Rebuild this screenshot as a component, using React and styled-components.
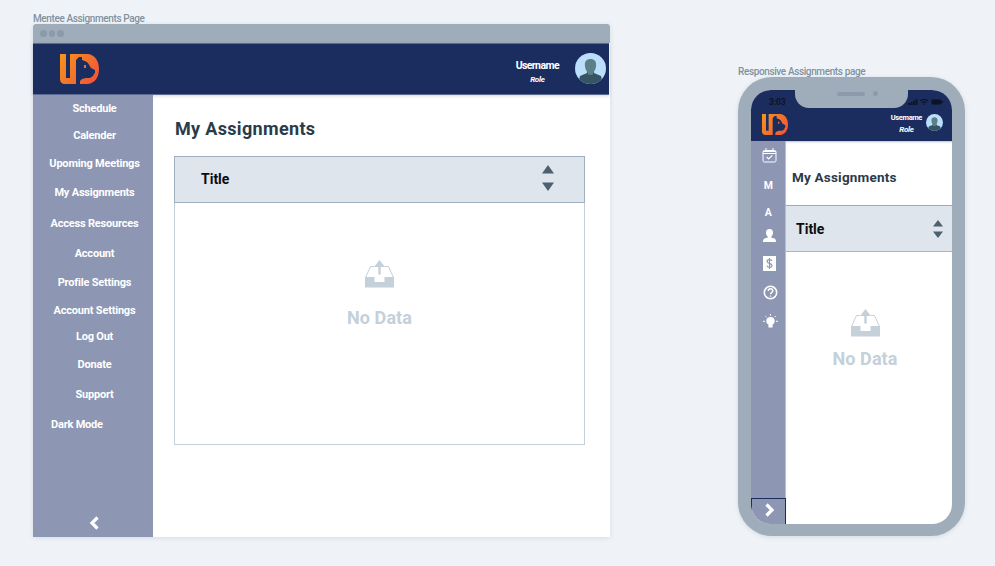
import React from "react";
import styled, { createGlobalStyle, css } from "styled-components";

const GlobalStyle = createGlobalStyle`
  *, *::before, *::after { box-sizing: border-box; }
  body {
    margin: 0;
    background: #eff3f7;
    font-family: Roboto, "Liberation Sans", sans-serif;
    overflow: hidden;
  }
`;

const Canvas = styled.main`
  display: flex;
  align-items: flex-start;
  gap: 128px;
  width: 995px;
  height: 566px;
  padding-left: 33px;
`;

const Artboard = styled.section`
  width: ${(p) => p.$width}px;
  padding-top: ${(p) => p.$top}px;
`;

const ArtboardLabel = styled.div`
  height: 12px;
  font-size: 10px;
  font-weight: 500;
  line-height: 14px;
  letter-spacing: -0.38px;
  color: #80919f;
  white-space: nowrap;
`;

const BrowserWindow = styled.div`
  background: #fff;
  border-radius: 3px 3px 0 0;
  box-shadow: 0 1px 4px rgba(120, 140, 160, 0.22);
`;

const BrowserBar = styled.div`
  display: flex;
  align-items: center;
  gap: 2px;
  height: 19px;
  padding-left: 7px;
  background: #9eadb9;
  border-radius: 3px 3px 0 0;
`;

const BarDot = styled.span`
  width: 6.5px;
  height: 6.5px;
  border-radius: 50%;
  background: #8c9bab;
`;

const Header = styled.header`
  display: flex;
  justify-content: space-between;
  background: #1b2d5f;
  ${(p) =>
    p.$compact
      ? css`
          height: 36px;
          padding: 9px 9px 0 11px;
        `
      : css`
          height: 52px;
          width: 576px;
          padding: 10px 3px 0 27px;
          border-top: 1px solid #5c6b8d;
          border-bottom: 1px solid #5d6b91;
          box-shadow: 0 1px 3px rgba(30, 45, 95, 0.2);
        `}
`;

const Account = styled.div`
  display: flex;
  align-items: flex-start;
  gap: ${(p) => (p.$compact ? 4 : 16)}px;
`;

const AccountText = styled.div`
  display: flex;
  flex-direction: column;
  align-items: center;
  color: #fff;
  font-weight: 700;
  white-space: nowrap;
  ${(p) =>
    p.$compact
      ? css`
          margin-top: -2px;
          font-size: 7.5px;
          line-height: 11px;
          letter-spacing: -0.4px;
        `
      : css`
          margin-top: 5px;
          font-size: 10.5px;
          line-height: 14px;
          letter-spacing: -0.6px;
        `}
`;

const Role = styled.span`
  font-size: 8px;
  font-style: italic;
  letter-spacing: -0.3px;
  ${(p) => p.$compact && css`margin-top: 1px;`}
`;

const AvatarSvg = styled.svg`
  display: block;
  flex: none;
  margin-top: ${(p) => p.$top}px;
`;

const WindowBody = styled.div`
  display: flex;
  height: 442px;
`;

const Sidebar = styled.nav`
  display: flex;
  flex: none;
  flex-direction: column;
  width: 120px;
  background: #8d96b2;
  color: #fff;
`;

const SidebarItem = styled.a`
  display: flex;
  align-items: center;
  justify-content: ${(p) => (p.$start ? "flex-start" : "center")};
  height: ${(p) => p.$height}px;
  padding-left: ${(p) => (p.$start ? 18 : 3)}px;
  font-size: 11px;
  font-weight: 700;
  line-height: 13px;
  letter-spacing: -0.2px;
  white-space: nowrap;
`;

const CollapseButton = styled.div`
  display: flex;
  align-items: center;
  justify-content: center;
  height: 28px;
  margin-top: auto;
  padding-left: 1px;
`;

const Content = styled.div`
  flex: 1;
  min-width: 0;
  padding: 23px 25px 0 21px;
`;

const Title = styled.h1`
  margin: 0;
  color: #2a3b49;
  font-weight: 700;
  white-space: nowrap;
  ${(p) =>
    p.$compact
      ? css`
          padding: 28px 0 0 6px;
          height: 64px;
          font-size: 13.5px;
          line-height: 16px;
          letter-spacing: 0.2px;
        `
      : css`
          padding-left: 1px;
          height: 38px;
          font-size: 18px;
          line-height: 22px;
          letter-spacing: 0.33px;
        `}
`;

const Table = styled.div`
  width: 411px;
  height: 289px;
  border: 1px solid #c4d0da;
`;

const TableHead = styled.div`
  display: flex;
  align-items: center;
  justify-content: space-between;
  background: #dfe5ed;
  color: #0b0d0f;
  font-weight: 700;
  font-size: 14px;
  ${(p) =>
    p.$compact
      ? css`
          height: 47px;
          padding: 0 9px 0 10px;
          border-top: 1px solid #9dabb7;
          border-bottom: 1px solid #a8b5c0;
        `
      : css`
          height: 47px;
          margin: -1px -1px 0;
          padding: 0 30px 4px 26px;
          border: 1px solid #9fafbf;
        `}
`;

const HeadText = styled.span`
  padding-top: ${(p) => p.$drop || 0}px;
`;

const EmptyState = styled.div`
  display: flex;
  flex-direction: column;
  align-items: center;
  padding-top: 57px;
  padding-right: ${(p) => (p.$compact ? 8 : 0)}px;
  color: #c4d0da;
`;

const EmptyText = styled.div`
  margin-top: ${(p) => p.$top}px;
  font-size: 18px;
  font-weight: 700;
  line-height: 22px;
  letter-spacing: 0.1px;
`;

const Phone = styled.div`
  width: 227px;
  height: 459px;
  padding: 13px 13px 12px;
  border-radius: 34px;
  background: #9eadb9;
  box-shadow: 0 1px 4px rgba(120, 140, 160, 0.25);
`;

const Screen = styled.div`
  width: 201px;
  height: 433.500px;
  overflow: hidden;
  border-radius: 20px;
  background: #fff;
`;

const StatusBar = styled.div`
  display: grid;
  grid-template-columns: 44px 113px 44px;
  height: 15px;
  background: #1b2d5f;
`;

const Clock = styled.span`
  padding: 6px 0 0 18px;
  color: #0c1327;
  font-size: 8.5px;
  font-weight: 700;
  line-height: 12px;
  letter-spacing: -0.1px;
  white-space: nowrap;
`;

const Notch = styled.div`
  display: flex;
  gap: 8px;
  padding: 1px 0 0 42px;
  border-radius: 0 0 14px 14px;
  background: #9eadb9;
`;

const Speaker = styled.span`
  width: 28px;
  height: 4px;
  margin-top: 1px;
  border-radius: 2px;
  background: #8c9bab;
`;

const Camera = styled.span`
  width: 5px;
  height: 5px;
  border-radius: 50%;
  background: #8c9bab;
`;

const StatusSvg = styled.svg`
  display: block;
  margin-top: 9px;
`;

const PhoneBody = styled.div`
  display: flex;
  height: 382.500px;
`;

const Rail = styled.nav`
  display: flex;
  flex: none;
  flex-direction: column;
  width: 35px;
  border-right: 1px solid #b6bed0;
  background: #8d96b2;
  color: #fff;
`;

const RailItem = styled.a`
  display: flex;
  flex: none;
  align-items: center;
  justify-content: center;
  height: ${(p) => p.$height}px;
  padding-left: ${(p) => p.$inset || 3}px;
  font-size: 10.5px;
  font-weight: 700;
`;

const ExpandButton = styled.div`
  display: flex;
  align-items: center;
  justify-content: center;
  width: 35px;
  height: 26px;
  margin-top: auto;
  padding: 0 0 2px 2px;
  border: 1px solid #1b2d5f;
  border-bottom: 0;
`;

const PhoneContent = styled.div`
  flex: 1;
  min-width: 0;
  box-shadow: inset 0 2px 2px -1px rgba(30, 45, 95, 0.3);
`;

function Logo({ width, height, id }) {
  return (
    <svg width={width} height={height} viewBox="0 0 39 30" preserveAspectRatio="none">
      <defs>
        <linearGradient id={id} x1="0" y1="0" x2="1" y2="0.6">
          <stop offset="0" stopColor="#f7941e" />
          <stop offset="1" stopColor="#f15a35" />
        </linearGradient>
      </defs>
      <path
        fill={`url(#${id})`}
        fillRule="evenodd"
        d="M0 0H6V24H10V0H28C35 1 39 7 39 15S35 29 28 30H20V27L22 25L26 24H30L33 22L34 20L35 19V16L31 14L28 9L25 7L22 6V3H19L16 6V30H5C2 30 0 28 0 25ZM24 11H26V14H24Z"
      />
    </svg>
  );
}

function Avatar({ size, top, id }) {
  return (
    <AvatarSvg $top={top} width={size} height={size} viewBox="0 0 31 31">
      <clipPath id={id}>
        <circle cx="15.5" cy="15.5" r="15.5" />
      </clipPath>
      <g clipPath={`url(#${id})`}>
        <rect width="31" height="31" fill="#bbdefb" />
        <path fill="#365563" d="M12 18h7v2l7 3 2 8H3l2-8 7-3Z" />
        <path fill="#5c7f88" d="M15.500 6c-3.900 0-5.900 2.500-5.600 6.200.2 3.500 1.400 6 2.900 7.300v1.800c1.600 1 3.800 1 5.400 0v-1.800c1.500-1.300 2.700-3.800 2.900-7.300C21.400 8.500 19.400 6 15.500 6Z" />
      </g>
    </AvatarSvg>
  );
}

function User({ compact, size, top, id }) {
  return (
    <Account $compact={compact}>
      <AccountText $compact={compact}>
        <span>Username</span>
        <Role $compact={compact}>Role</Role>
      </AccountText>
      <Avatar size={size} top={top} id={id} />
    </Account>
  );
}

function SortArrows({ width, height, gap }) {
  const total = height * 2 + gap;
  return (
    <svg width={width} height={total} fill="#4c6070">
      <path d={`M0 ${height}L${width / 2} 0L${width} ${height}Z`} />
      <path d={`M0 ${height + gap}H${width}L${width / 2} ${total}Z`} />
    </svg>
  );
}

function UploadTray() {
  return (
    <svg width="29" height="28" viewBox="0 0 29 28" fill="none">
      <path d="M9 6.500H5.500L.5 17.500V26.500H28.500V17.500L23.500 6.500H20" stroke="#c4d0da" />
      <path d="M0 17H9.500V22H19.500V17H29V27.500H0Z" fill="#c4d0da" />
      <path d="M14.500 0L20 7H15.700V14.500H13.300V7H9Z" fill="#c4d0da" />
    </svg>
  );
}

function Chevron({ left }) {
  return (
    <svg width="10" height="14" viewBox="0 0 10 14" fill="none" stroke="#fff" strokeWidth="3.200">
      <path d={left ? "M8.500 1.500L3 7L8.500 12.500" : "M1.500 1.500L7 7L1.500 12.500"} />
    </svg>
  );
}

function CalendarIcon() {
  return (
    <svg width="15" height="15" viewBox="0 0 15 15" fill="none" stroke="#fff">
      <rect x="1" y="2.500" width="13" height="11.500" rx="1.500" />
      <path d="M1 3.500H14M1 5.500H14M4 0V3M11 0V3" />
      <path d="M4.700 9L6.700 11L10.300 7.300" strokeWidth="1.200" />
    </svg>
  );
}

function PersonIcon() {
  return (
    <svg width="13" height="13" viewBox="0 0 13 13" fill="#fff">
      <path d="M6.500 0C4.100 0 2.800 1.500 3 3.700c.1 1.800.8 3.200 1.800 4v.8L1.500 9.500C.4 10 0 11 0 13h13c0-2-.4-3-1.500-3.500L8.200 8.500v-.8c1-.8 1.700-2.200 1.800-4C10.200 1.500 8.900 0 6.500 0Z" />
    </svg>
  );
}

function DollarIcon() {
  return (
    <svg width="13" height="15" viewBox="0 0 13 15">
      <rect width="13" height="15" fill="#fff" />
      <path d="M9 5C8.600 4 7.800 3.700 6.500 3.700C5 3.700 4.100 4.300 4.100 5.500C4.100 8.100 9 6.600 9 9.400C9 10.700 8 11.300 6.500 11.300C5 11.300 4.200 10.800 3.900 9.700M6.500 2V13" fill="none" stroke="#8d96b2" strokeWidth="1.150" />
    </svg>
  );
}

function HelpIcon() {
  return (
    <svg width="15" height="15" viewBox="0 0 15 15" fill="none" stroke="#fff">
      <circle cx="7.500" cy="7.500" r="6.200" strokeWidth="1.600" />
      <path d="M5.200 6C5.200 4.500 6.100 3.800 7.500 3.800S9.800 4.600 9.800 5.900C9.800 7.400 7.500 7.500 7.500 9.300M7.500 10.400V11.800" strokeWidth="1.500" />
    </svg>
  );
}

function BulbIcon() {
  return (
    <svg width="15" height="14" viewBox="0 0 15 14">
      <path d="M7.500 3C5 3 3.300 4.700 3.300 6.900c0 1.700.9 2.900 2.100 3.600V13.500h4.200v-3c1.200-.7 2.100-1.900 2.100-3.600C11.700 4.700 10 3 7.500 3Z" fill="#fff" />
      <path d="M7.500 0V1.700M2.300 2L3.500 3.200M12.700 2L11.500 3.200M0 7.300H2M13 7.300H15" stroke="#fff" />
    </svg>
  );
}

function StatusIcons() {
  return (
    <StatusSvg width="36" height="6" viewBox="0 0 36 6" fill="#0c1327">
      <path d="M0 4H2V6H0ZM2.600 3H4.600V6H2.600ZM5.200 1.500H7.200V6H5.200ZM7.800 0H9.500V6H7.800Z" />
      <path d="M12.500 2C14.500 0 18 0 20 2M14 3.900C15.300 2.700 17.200 2.700 18.500 3.900" fill="none" stroke="#0c1327" strokeWidth="1.200" />
      <circle cx="16.250" cy="5.200" r=".8" />
      <rect x="23.500" y=".5" width="10" height="5" rx="1.200" />
      <rect x="34" y="2" width="1" height="2" />
    </StatusSvg>
  );
}

const menu = [
  { text: "Schedule", height: 26 },
  { text: "Calender", height: 28 },
  { text: "Upoming Meetings", height: 28 },
  { text: "My Assignments", height: 30 },
  { text: "Access Resources", height: 32 },
  { text: "Account", height: 28 },
  { text: "Profile Settings", height: 30 },
  { text: "Account Settings", height: 26 },
  { text: "Log Out", height: 26 },
  { text: "Donate", height: 30 },
  { text: "Support", height: 30 },
  { text: "Dark Mode", height: 30, start: true },
];

const rail = [
  { content: <CalendarIcon />, height: 29 },
  { content: "M", height: 30, inset: 0.5 },
  { content: "A", height: 24, inset: 0.5 },
  { content: <PersonIcon />, height: 23 },
  { content: <DollarIcon />, height: 32 },
  { content: <HelpIcon />, height: 27, inset: 4 },
  { content: <BulbIcon />, height: 29, inset: 4 },
];

export default function App() {
  return (
    <>
      <GlobalStyle />
      <Canvas>
        <Artboard $width={577} $top={12}>
          <ArtboardLabel>Mentee Assignments Page</ArtboardLabel>
          <BrowserWindow>
            <BrowserBar>
              <BarDot />
              <BarDot />
              <BarDot />
            </BrowserBar>
            <Header>
              <Logo width={39} height={30} id="logoWide" />
              <User size={31} top={-1} id="avatarWide" />
            </Header>
            <WindowBody>
              <Sidebar>
                {menu.map((item) => (
                  <SidebarItem key={item.text} $height={item.height} $start={item.start}>
                    {item.text}
                  </SidebarItem>
                ))}
                <CollapseButton>
                  <Chevron left />
                </CollapseButton>
              </Sidebar>
              <Content>
                <Title>My Assignments</Title>
                <Table>
                  <TableHead>
                    <HeadText $drop={2}>Title</HeadText>
                    <SortArrows width={12} height={8.5} gap={9} />
                  </TableHead>
                  <EmptyState>
                    <UploadTray />
                    <EmptyText $top={19}>No Data</EmptyText>
                  </EmptyState>
                </Table>
              </Content>
            </WindowBody>
          </BrowserWindow>
        </Artboard>
        <Artboard $width={227} $top={65}>
          <ArtboardLabel>Responsive Assignments page</ArtboardLabel>
          <Phone>
            <Screen>
              <StatusBar>
                <Clock>3:03</Clock>
                <Notch>
                  <Speaker />
                  <Camera />
                </Notch>
                <StatusIcons />
              </StatusBar>
              <Header $compact>
                <Logo width={26} height={21} id="logoPhone" />
                <User compact size={17} top={0} id="avatarPhone" />
              </Header>
              <PhoneBody>
                <Rail>
                  {rail.map((item, index) => (
                    <RailItem key={index} $height={item.height} $inset={item.inset}>
                      {item.content}
                    </RailItem>
                  ))}
                  <ExpandButton>
                    <Chevron />
                  </ExpandButton>
                </Rail>
                <PhoneContent>
                  <Title $compact>My Assignments</Title>
                  <TableHead $compact>
                    <HeadText>Title</HeadText>
                    <SortArrows width={10} height={6.5} gap={5} />
                  </TableHead>
                  <EmptyState $compact>
                    <UploadTray />
                    <EmptyText $top={11}>No Data</EmptyText>
                  </EmptyState>
                </PhoneContent>
              </PhoneBody>
            </Screen>
          </Phone>
        </Artboard>
      </Canvas>
    </>
  );
}
